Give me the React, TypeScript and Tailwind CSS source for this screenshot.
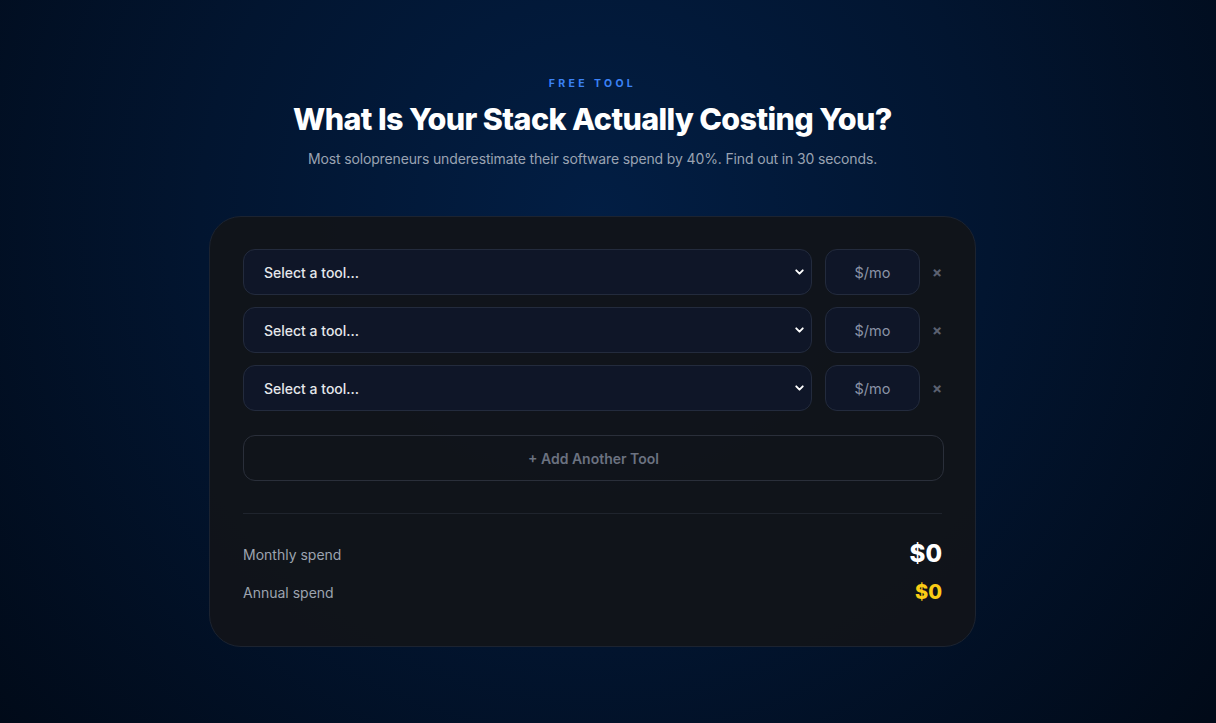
import { ChevronDown } from "lucide-react";

const rows = [0, 1, 2];

function ToolRow() {
  return (
    <div className="flex items-center gap-[13px]">
      <div className="relative w-[569px] shrink-0">
        <select
          defaultValue=""
          className="h-[46px] w-full appearance-none rounded-xl border border-[#232b3d] bg-[#0f1628] pl-5 pr-10 text-[14px] font-medium text-[#e5e7eb] outline-none"
        >
          <option value="">Select a tool...</option>
        </select>
        <ChevronDown
          className="pointer-events-none absolute right-[6px] top-1/2 h-[13px] w-[13px] -translate-y-1/2 text-white"
          strokeWidth={3.5}
        />
      </div>
      <input
        placeholder="$/mo"
        className="h-[46px] w-[95px] shrink-0 rounded-xl border border-[#232b3d] bg-[#0f1628] text-center text-[14.5px] text-[#e5e7eb] outline-none placeholder:text-[#8a93a6]"
      />
      <button className="flex min-w-0 flex-1 items-center justify-center pr-[1px] text-[15px] font-bold leading-none text-[#5b6170]">
        ×
      </button>
    </div>
  );
}

export default function App() {
  return (
    <div
      className="min-h-screen w-full bg-[radial-gradient(ellipse_65%_110%_at_49%_30%,#021e44_0%,#021530_50%,#010a18_100%)] pb-[77px] pr-[31px] pt-[76px] text-white"
      style={{ fontFamily: "Inter, 'Noto Sans', sans-serif" }}
    >
      <div className="flex flex-col items-center text-center">
        <p className="text-[10.5px] font-bold uppercase leading-4 tracking-[0.32em] text-[#3b82f6]">Free Tool</p>
        <h1 className="mt-[7px] text-[30.5px] font-extrabold leading-[40px] tracking-[-0.02em] text-white">
          What Is Your Stack Actually Costing You?
        </h1>
        <p className="mt-[10px] text-[14px] leading-5 tracking-[-0.01em] text-[#9aa3b2]">
          Most solopreneurs underestimate their software spend by 40%. Find out in 30 seconds.
        </p>
      </div>

      <div className="mx-auto mt-[47px] w-[767px] rounded-[32px] border border-[#1c2330] bg-[#111419]/95 px-[33px] pb-[38px] pt-[32px]">
        <div className="flex flex-col gap-3">
          {rows.map((r) => (
            <ToolRow key={r} />
          ))}
        </div>
        <button className="mt-6 flex h-[46px] w-[701px] items-center justify-center rounded-xl border border-[#2a2f3a] text-[14px] font-semibold text-[#6b7280]">
          + Add Another Tool
        </button>

        <div className="mt-8 border-t border-[#1f242d] pt-6">
          <div className="flex items-center justify-between">
            <span className="text-[14px] text-[#9ca3af]">Monthly spend</span>
            <span className="text-[24px] font-extrabold leading-8 text-white">$0</span>
          </div>
          <div className="mt-[6px] flex items-center justify-between">
            <span className="text-[14px] text-[#9ca3af]">Annual spend</span>
            <span className="text-[20px] font-extrabold leading-8 text-[#facc15]">$0</span>
          </div>
        </div>
      </div>
    </div>
  );
}
